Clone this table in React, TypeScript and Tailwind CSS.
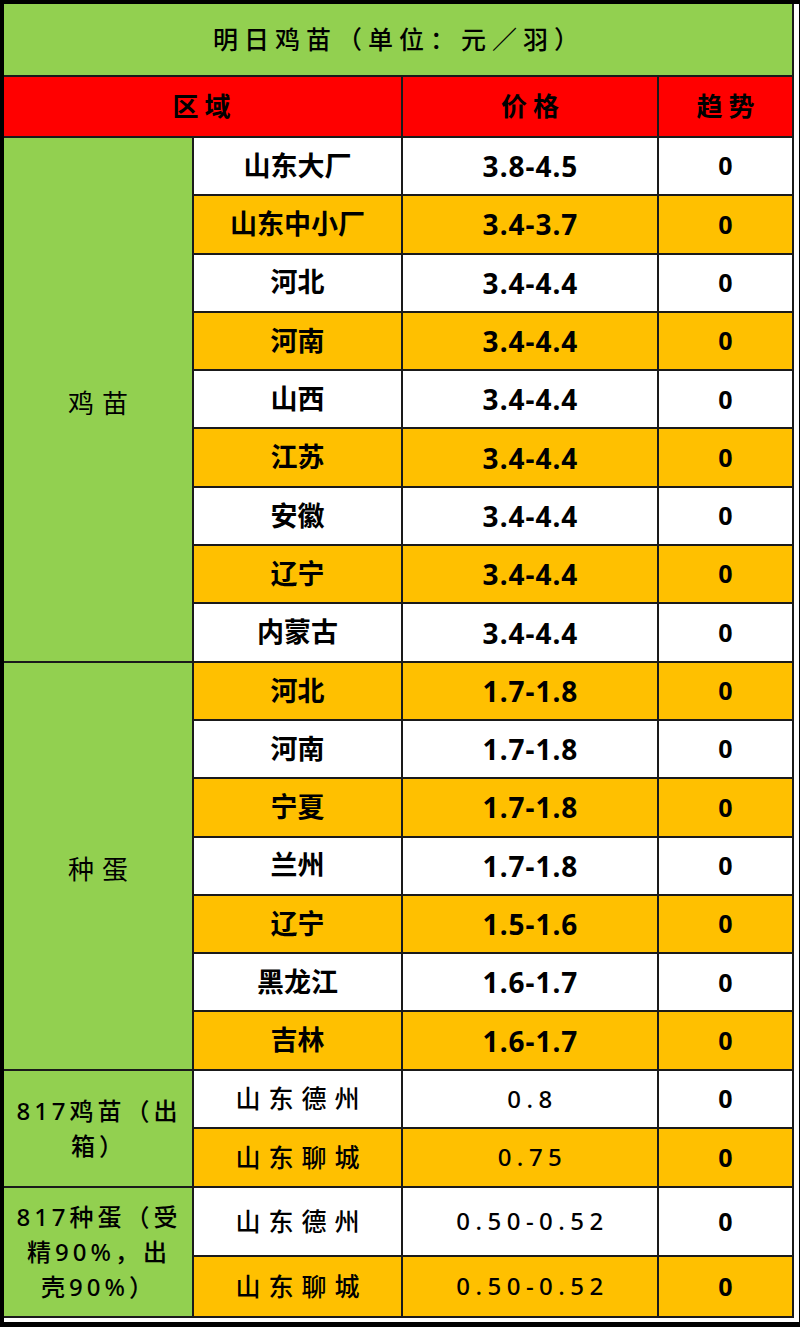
import React from 'react';

type Row = { area: string; price: string; h: string };
type Group = { label: string[]; kind: 'main' | 'sub'; rows: Row[] };

const H = 'h-[58.3px]';

const groups: Group[] = [
  {
    label: ['鸡苗'],
    kind: 'main',
    rows: [
      { area: '山东大厂', price: '3.8-4.5', h: H },
      { area: '山东中小厂', price: '3.4-3.7', h: H },
      { area: '河北', price: '3.4-4.4', h: H },
      { area: '河南', price: '3.4-4.4', h: H },
      { area: '山西', price: '3.4-4.4', h: H },
      { area: '江苏', price: '3.4-4.4', h: H },
      { area: '安徽', price: '3.4-4.4', h: H },
      { area: '辽宁', price: '3.4-4.4', h: H },
      { area: '内蒙古', price: '3.4-4.4', h: H },
    ],
  },
  {
    label: ['种蛋'],
    kind: 'main',
    rows: [
      { area: '河北', price: '1.7-1.8', h: H },
      { area: '河南', price: '1.7-1.8', h: H },
      { area: '宁夏', price: '1.7-1.8', h: H },
      { area: '兰州', price: '1.7-1.8', h: H },
      { area: '辽宁', price: '1.5-1.6', h: H },
      { area: '黑龙江', price: '1.6-1.7', h: H },
      { area: '吉林', price: '1.6-1.7', h: H },
    ],
  },
  {
    label: ['817鸡苗（出', '箱）'],
    kind: 'sub',
    rows: [
      { area: '山东德州', price: '0.8', h: 'h-[58px]' },
      { area: '山东聊城', price: '0.75', h: 'h-[59px]' },
    ],
  },
  {
    label: ['817种蛋（受', '精90%，出', '壳90%）'],
    kind: 'sub',
    rows: [
      { area: '山东德州', price: '0.50-0.52', h: 'h-[69px]' },
      { area: '山东聊城', price: '0.50-0.52', h: 'h-[61px]' },
    ],
  },
];

const font = "font-['Noto_Sans','Noto_Sans_CJK_SC',sans-serif]";
const cell = 'border-2 border-[#1a1a1a] text-center align-middle p-0';

export default function App() {
  let idx = 0;
  return (
    <div className={`w-[800px] h-[1327px] bg-black pt-[4px] pl-[4px] pb-[5px] pr-[1px] ${font} text-black`}>
      <div className="w-full h-full bg-white pr-[6px] pb-[5px]">
        <table className="table-fixed border-collapse w-[789px]">
          <colgroup>
            <col className="w-[189px]" />
            <col className="w-[209px]" />
            <col className="w-[256px]" />
            <col className="w-[135px]" />
          </colgroup>
          <tbody>
            <tr className="h-[72px] bg-[#92D050]">
              <td colSpan={4} className={`${cell} border-t-0 border-l-0 font-medium text-[25px] tracking-[6px] pl-[2px]`}>
                明日鸡苗（单位：元／羽）
              </td>
            </tr>
            <tr className="h-[61px] bg-[#FF0000] font-bold text-[26px] tracking-[6px]">
              <td colSpan={2} className={`${cell} border-l-0 pl-[4px]`}>区域</td>
              <td className={`${cell} pl-[6px]`}>价格</td>
              <td className={`${cell} pl-[6px]`}>趋势</td>
            </tr>
            {groups.map((g) =>
              g.rows.map((r, i) => {
                const bg = idx++ % 2 === 0 ? 'bg-white' : 'bg-[#FFC000]';
                const main = g.kind === 'main';
                return (
                  <tr key={g.label[0] + i} className={r.h}>
                    {i === 0 && (
                      <td
                        rowSpan={g.rows.length}
                        className={`${cell} border-l-0 bg-[#92D050] ${
                          main
                            ? 'text-[26px] tracking-[8px] pl-[8px] pt-[8px]'
                            : 'font-medium text-[24px] leading-[35px] tracking-[4px] pl-[2px]'
                        }`}
                      >
                        {g.label.map((l) => (
                          <div key={l}>{l}</div>
                        ))}
                      </td>
                    )}
                    <td
                      className={`${cell} ${bg} ${
                        main ? 'font-bold text-[27px]' : 'font-medium text-[25px] tracking-[8px] pl-[8px]'
                      }`}
                    >
                      {r.area}
                    </td>
                    <td
                      className={`${cell} ${bg} ${
                        main
                          ? 'font-bold text-[28px] tracking-[1px] pl-[1px]'
                          : 'font-medium text-[24px] tracking-[5.5px] pl-[5px]'
                      }`}
                    >
                      {r.price}
                    </td>
                    <td className={`${cell} ${bg} font-bold text-[25px]`}>0</td>
                  </tr>
                );
              })
            )}
          </tbody>
        </table>
      </div>
    </div>
  );
}
